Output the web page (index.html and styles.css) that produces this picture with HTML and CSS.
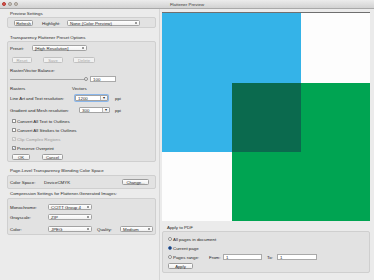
FILE: index.html
```html
<!DOCTYPE html>
<html lang="en">
<head>
  <meta charset="UTF-8">
  <meta name="viewport" content="width=device-width, initial-scale=1.0">
  <title>Flattener Preview</title>
  <link rel="stylesheet" href="styles.css">
</head>
<body>
  <div class="titlebar">
    <div class="lights">
      <span class="light red"></span>
      <span class="light"></span>
      <span class="light"></span>
    </div>
    <div class="title">Flattener Preview</div>
  </div>

  <div class="main">
    <div class="left">
      <div class="group-label">Preview Settings</div>
      <div class="box box-preview">
        <div class="row">
          <button class="btn w-refresh">Refresh</button>
          <span class="lbl lbl-highlight">Highlight:</span>
          <div class="popup w-highlight">None (Color Preview)</div>
        </div>
      </div>

      <div class="group-label gl-preset">Transparency Flattener Preset Options</div>
      <div class="box box-preset">
        <div class="row">
          <span class="lbl w-preset">Preset:</span>
          <div class="popup w-presetsel">[High Resolution]</div>
        </div>
        <div class="row mt4">
          <button class="btn disabled w-reset">Reset</button>
          <button class="btn disabled w-save">Save</button>
          <button class="btn disabled w-delete">Delete</button>
        </div>
        <div class="row mt2">
          <span class="lbl">Raster/Vector Balance:</span>
        </div>
        <div class="row mt1">
          <div class="slider"><div class="track"></div><div class="thumb"></div></div>
          <div class="field w-balance">100</div>
        </div>
        <div class="row mt1">
          <span class="lbl w-rasters">Rasters</span>
          <span class="lbl">Vectors</span>
        </div>
        <div class="row mt2">
          <span class="lbl w-lineart">Line Art and Text resolution:</span>
          <div class="combo focus w-1200"><span>1200</span><span class="combo-arrow">&#9662;</span></div>
          <span class="lbl ppi">ppi</span>
        </div>
        <div class="row mt4">
          <span class="lbl w-gradient">Gradient and Mesh resolution:</span>
          <div class="combo w-300"><span>300</span><span class="combo-arrow">&#9662;</span></div>
          <span class="lbl ppi ppi2">ppi</span>
        </div>
        <div class="row mt3 check-row">
          <span class="cb"></span><span class="lbl">Convert All Text to Outlines</span>
        </div>
        <div class="row mt1 check-row">
          <span class="cb"></span><span class="lbl">Convert All Strokes to Outlines</span>
        </div>
        <div class="row mt1 check-row">
          <span class="cb checked off">
            <svg viewBox="0 0 10 10"><path d="M2 5.5 L4.2 8 L8.5 1.5" fill="none" stroke="#a0a0a0" stroke-width="1.8"/></svg>
          </span><span class="lbl off">Clip Complex Regions</span>
        </div>
        <div class="row mt1 check-row">
          <span class="cb checked">
            <svg viewBox="0 0 10 10"><path d="M2 5.5 L4.2 8 L8.5 1.5" fill="none" stroke="#1d3f8a" stroke-width="1.8"/></svg>
          </span><span class="lbl">Preserve Overprint</span>
        </div>
        <div class="row mt1">
          <button class="btn w-ok">OK</button>
          <button class="btn w-cancel">Cancel</button>
        </div>
      </div>

      <div class="group-label gl-blend">Page-Level Transparency Blending Color Space</div>
      <div class="box box-blend">
        <div class="row">
          <span class="lbl w-colorspace">Color Space:</span>
          <span class="lbl">DeviceCMYK</span>
          <button class="btn w-change">Change...</button>
        </div>
      </div>

      <div class="group-label gl-comp">Compression Settings for Flattener-Generated Images:</div>
      <div class="box box-comp">
        <div class="row">
          <span class="lbl w-comp">Monochrome:</span>
          <div class="popup w-compsel">CCITT Group 4</div>
        </div>
        <div class="row mt2">
          <span class="lbl w-comp">Grayscale:</span>
          <div class="popup w-compsel">ZIP</div>
        </div>
        <div class="row mt4">
          <span class="lbl w-comp">Color:</span>
          <div class="popup w-compsel">JPEG</div>
          <span class="lbl w-quality">Quality:</span>
          <div class="popup w-medium">Medium</div>
        </div>
      </div>
    </div>

    <div class="right">
      <div class="preview">
        <svg class="art" viewBox="0 0 208 208" width="208" height="208">
          <rect x="0" y="0" width="139" height="139" fill="#34b3e8"/>
          <rect x="70" y="70" width="138" height="138" fill="#00a452"/>
          <rect x="70" y="70" width="69" height="69" fill="#0b6a4e"/>
        </svg>
      </div>

      <div class="group-label gl-apply">Apply to PDF</div>
      <div class="box box-apply">
        <div class="row">
          <span class="radio"></span><span class="lbl">All pages in document</span>
        </div>
        <div class="row mt1">
          <span class="radio on"></span><span class="lbl">Current page</span>
        </div>
        <div class="row mt1">
          <span class="radio"></span><span class="lbl w-range">Pages range:</span>
          <span class="lbl w-from">From:</span>
          <div class="field w-pagefrom">1</div>
          <span class="lbl w-to">To:</span>
          <div class="field w-pageto">1</div>
        </div>
        <div class="row mt1">
          <button class="btn w-apply">Apply</button>
        </div>
      </div>
    </div>
  </div>
</body>
</html>
```

FILE: styles.css
```css
* {
  margin: 0;
  padding: 0;
  box-sizing: border-box;
}

body {
  width: 374px;
  height: 280px;
  overflow: hidden;
  background: #ebebeb;
  font-family: 'Liberation Sans', Arial, sans-serif;
  font-size: 4.4px;
  color: #1f1f1f;
}

/* window chrome */
.titlebar {
  height: 9px;
  display: grid;
  grid-template-columns: 1fr auto 1fr;
  align-items: center;
  background: linear-gradient(#ececec, #d2d2d2);
  border-bottom: 1px solid #a9a9a9;
}

.lights {
  display: flex;
  gap: 2px;
  padding-left: 2px;
}

.light {
  width: 4px;
  height: 4px;
  border-radius: 50%;
  background: #cfc8c0;
  border: 0.5px solid #9e978f;
}

.light.red {
  background: #e0574f;
  border-color: #b03a33;
}

.title {
  color: #3a3a3a;
  font-size: 4.4px;
}

.main {
  display: flex;
  height: 271px;
}

/* left column */
.left {
  width: 160px;
  padding: 2px 3px 0 7px;
  border-right: 1px solid #d6d6d6;
}

.group-label {
  height: 6px;
  line-height: 6px;
  padding-left: 3px;
  color: #2a2a2a;
}

.gl-preset { margin-top: 7px; }
.gl-blend { margin-top: 6px; }
.gl-comp { margin-top: 2px; }

.box {
  background: #e2e2e2;
  border: 1px solid #cfcfcf;
  border-radius: 2px;
  padding-left: 2px;
}

.box-preview { padding: 1px 0 0 6px; }
.box-preset { padding-top: 2px; }
.box-blend { margin-top: 1px; padding: 2px 6px 2px 2px; }
.box-comp { margin-top: 1px; padding-top: 4px; padding-bottom: 1px; }

.row {
  height: 8px;
  display: flex;
  align-items: center;
}

.mt1 { margin-top: 1px; }
.mt2 { margin-top: 2px; }
.mt3 { margin-top: 3px; }
.mt4 { margin-top: 4px; }

.lbl {
  white-space: nowrap;
  flex-shrink: 0;
}

.lbl.off {
  color: #9a9a9a;
}

/* controls */
.btn {
  height: 6px;
  font-family: inherit;
  font-size: 4.2px;
  color: #1f1f1f;
  border: 0.7px solid #9c9c9c;
  border-radius: 1.5px;
  background: linear-gradient(#ffffff, #ededed);
  display: flex;
  align-items: center;
  justify-content: center;
  flex-shrink: 0;
}

.btn.disabled {
  color: #a3a3a3;
  border-color: #c2c2c2;
  background: #f0f0f0;
}

.popup {
  height: 6px;
  line-height: 5px;
  padding-left: 2px;
  background: linear-gradient(#ffffff, #f1f1f1);
  border: 0.7px solid #a3a3a3;
  border-radius: 1.5px;
  position: relative;
  white-space: nowrap;
  flex-shrink: 0;
}

.popup::before,
.popup::after {
  content: '';
  position: absolute;
  right: 2px;
  border-left: 1px solid transparent;
  border-right: 1px solid transparent;
}

.popup::before {
  top: 1px;
  border-bottom: 1.2px solid #3a3a3a;
}

.popup::after {
  bottom: 1px;
  border-top: 1.2px solid #3a3a3a;
}

.combo {
  height: 6px;
  display: flex;
  border: 0.7px solid #a3a3a3;
  border-radius: 1px;
  background: #fff;
  flex-shrink: 0;
}

.combo span:first-child {
  flex: 1;
  line-height: 5px;
  padding-left: 2px;
}

.combo-arrow {
  width: 7px;
  border-left: 0.7px solid #b5b5b5;
  background: linear-gradient(#ffffff, #ececec);
  font-size: 3.5px;
  line-height: 5px;
  text-align: center;
}

.combo.focus {
  box-shadow: 0 0 0 1px #8ab6ea;
}

.field {
  height: 6px;
  line-height: 5.4px;
  padding-left: 2px;
  background: #fff;
  border: 0.7px solid #a9a9a9;
  flex-shrink: 0;
}

.slider {
  width: 78px;
  height: 6px;
  position: relative;
  flex-shrink: 0;
}

.track {
  position: absolute;
  left: 0;
  right: 2px;
  top: 2.5px;
  height: 1.2px;
  background: #a8a8a8;
  border-radius: 1px;
}

.thumb {
  position: absolute;
  right: 0;
  top: 0.8px;
  width: 4.5px;
  height: 4.5px;
  border-radius: 50%;
  background: linear-gradient(#ffffff, #e3e3e3);
  border: 0.6px solid #8f8f8f;
}

.cb {
  width: 4px;
  height: 4px;
  margin: 0 1px 0 2px;
  background: #fff;
  border: 0.6px solid #8e8e8e;
  border-radius: 0.6px;
  flex-shrink: 0;
  display: flex;
}

.cb svg {
  width: 100%;
  height: 100%;
}

.cb.off {
  background: #f2f2f2;
  border-color: #c4c4c4;
}

.radio {
  width: 4px;
  height: 4px;
  margin-right: 1px;
  border-radius: 50%;
  background: #fff;
  border: 0.6px solid #8e8e8e;
  flex-shrink: 0;
}

.radio.on {
  background: radial-gradient(circle, #1b2f55 0 0.8px, #6aa5e8 1.1px, #3f82d9 100%);
  border-color: #3669b0;
}

/* widths */
.w-refresh { width: 19px; }
.lbl-highlight { margin-left: 9px; width: 25px; }
.w-highlight { width: 73px; }

.w-preset { width: 22px; }
.w-presetsel { width: 55px; }
.w-reset { width: 20px; margin-left: 2px; }
.w-save { width: 20px; margin-left: 11px; }
.w-delete { width: 22px; margin-left: 10px; }
.w-balance { width: 26px; margin-left: 2px; }
.w-rasters { width: 62px; }
.w-lineart { width: 65px; }
.w-1200 { width: 33px; }
.w-gradient { width: 69px; }
.w-300 { width: 31px; }
.ppi { margin-left: 7px; }
.ppi2 { margin-left: 5px; }
.w-ok { width: 18px; margin-left: 2px; }
.w-cancel { width: 21px; margin-left: 12px; }

.w-colorspace { width: 34px; }
.w-change { width: 27px; margin-left: auto; }

.w-comp { width: 38px; }
.w-compsel { width: 44px; }
.w-quality { width: 23px; margin-left: 5px; }
.w-medium { width: 33px; }

/* right column */
.right {
  flex: 1;
  padding: 3px 4px 0 2px;
}

.preview {
  height: 209px;
  background: #fdfdfd;
  border-top: 1px solid #6f6f6f;
}

.art {
  display: block;
}

.gl-apply {
  margin-top: 4px;
  padding-left: 5px;
}

.box-apply {
  padding: 3px 0 2px 5px;
}

.w-range { width: 36px; }
.w-from { width: 14px; }
.w-pagefrom { width: 39px; }
.w-to { width: 10px; margin-left: 5px; }
.w-pageto { width: 40px; }
.w-apply { width: 25px; }
```
